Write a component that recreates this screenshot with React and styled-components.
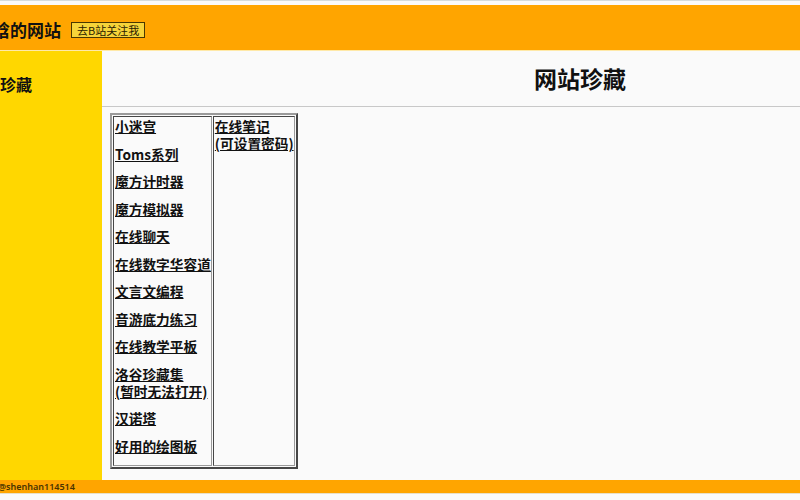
import React from 'react'
import styled, { createGlobalStyle } from 'styled-components'

const GlobalStyle = createGlobalStyle`
html, body {
    margin: 0;
    padding: 0;
    background: #fafafa;
    font-family: "Noto Sans CJK SC", "Noto Sans", sans-serif;
}
`

const Viewport = styled.div`
width: 800px;
height: 500px;
overflow: hidden;
border-top: 1px solid #d6dcdc;
box-sizing: border-box;
padding-top: 4px;
background: #fafafa;
`

const Page = styled.div`
width: 1098px;
margin-left: -40px;
display: flex;
flex-direction: column;
`

const Header = styled.header`
height: 46px;
background: #ffa500;
display: flex;
align-items: center;
gap: 10px;
padding: 4px 0 0 16px;
border-bottom: 1px solid #ffe9a8;
box-sizing: border-box;
`

const SiteTitle = styled.h1`
margin: 0;
font-size: 17px;
line-height: 22px;
font-weight: 700;
color: #111;
`

const FollowButton = styled.button`
font-family: "Noto Sans CJK SC", sans-serif;
font-size: 11px;
line-height: 12px;
padding: 1px 5px;
height: 16px;
background: #f6d43a;
color: #2a2000;
border: 1px solid #4a3800;
border-radius: 0;
cursor: pointer;
`

const Body = styled.div`
display: flex;
height: 429px;
`

const Sidebar = styled.aside`
width: 142px;
flex-shrink: 0;
background: #ffd700;
padding: 23px 8px 0;
box-sizing: border-box;
`

const SideTitle = styled.h3`
margin: 0;
font-size: 16px;
line-height: 20px;
font-weight: 700;
color: #111;
`

const Main = styled.main`
flex: 1;
background: #fafafa;
display: flex;
flex-direction: column;
`

const MainTitle = styled.h2`
margin: 13px 0 0;
text-align: center;
font-size: 23px;
line-height: 28px;
font-weight: 700;
color: #111;
`

const Divider = styled.hr`
margin: 14px 0 6px;
border: none;
border-top: 1px solid #c8c8c8;
height: 0;
`

const LinkTable = styled.table`
margin-left: 8px;
border: 2px outset #9a9a9a;
border-spacing: 1px;
align-self: flex-start;
`

const Cell = styled.td`
border: 1px inset #9a9a9a;
padding: 1px 0 0 1px;
vertical-align: top;
`

const Item = styled.a`
display: block;
margin-bottom: 10.5px;
font-size: 13.7px;
line-height: 17px;
font-weight: 700;
color: #111;
text-decoration: underline;
text-underline-offset: 1px;
white-space: nowrap;
`

const Footer = styled.footer`
height: 13px;
background: #ffa500;
padding-left: 38px;
font-family: "Noto Sans", sans-serif;
font-size: 9px;
font-weight: 600;
line-height: 13px;
color: #4a3400;
border-bottom: 1px solid #e8e0c8;
`

const firstColumn = [
    ['小迷宫'],
    ['Toms系列'],
    ['魔方计时器'],
    ['魔方模拟器'],
    ['在线聊天'],
    ['在线数字华容道'],
    ['文言文编程'],
    ['音游底力练习'],
    ['在线教学平板'],
    ['洛谷珍藏集', '(暂时无法打开)'],
    ['汉诺塔'],
    ['好用的绘图板'],
]

const secondColumn = [
    ['在线笔记', '(可设置密码)'],
]

const renderItems = (items) => items.map((lines, i) => (
    <Item key={i} href="#">
        {lines.map((line, j) => (
            <React.Fragment key={j}>
                {j > 0 && <br />}
                {line}
            </React.Fragment>
        ))}
    </Item>
))

export default function App() {
    return (
        <>
            <GlobalStyle />
            <Viewport>
                <Page>
                    <Header>
                        <SiteTitle>沈晗的网站</SiteTitle>
                        <FollowButton>去B站关注我</FollowButton>
                    </Header>
                    <Body>
                        <Sidebar>
                            <SideTitle>网站珍藏</SideTitle>
                        </Sidebar>
                        <Main>
                            <MainTitle>网站珍藏</MainTitle>
                            <Divider />
                            <LinkTable>
                                <tbody>
                                    <tr>
                                        <Cell>{renderItems(firstColumn)}</Cell>
                                        <Cell>{renderItems(secondColumn)}</Cell>
                                    </tr>
                                </tbody>
                            </LinkTable>
                        </Main>
                    </Body>
                    <Footer>@shenhan114514</Footer>
                </Page>
            </Viewport>
        </>
    )
}
